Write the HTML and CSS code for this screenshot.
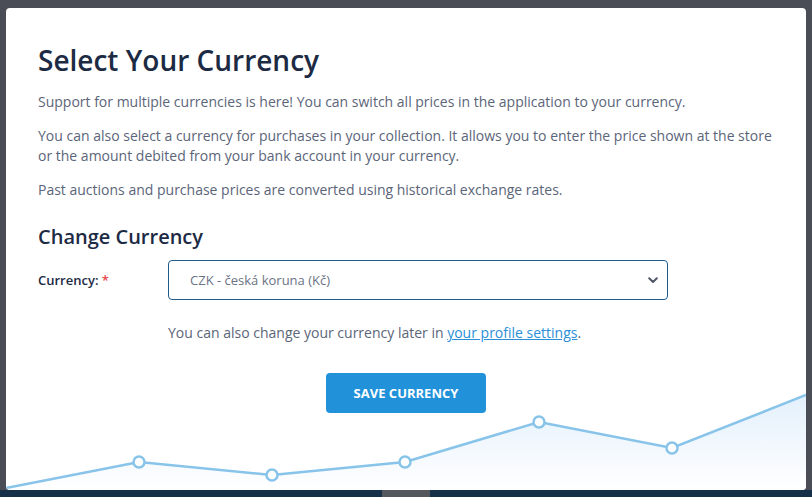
FILE: index.html
```html
<!DOCTYPE html>
<html lang="en">
<head>
    <meta charset="UTF-8">
    <meta name="viewport" content="width=device-width, initial-scale=1.0">
    <title>Select Your Currency</title>
    <link rel="stylesheet" href="styles.css">
</head>
<body>
    <div class="backdrop">
        <div class="modal">
            <svg class="modal-chart" viewBox="0 0 800 100" preserveAspectRatio="none" width="800" height="100">
                <defs>
                    <linearGradient id="chartFill" x1="0" y1="0" x2="0" y2="1">
                        <stop offset="0" stop-color="#e3f0fc"/>
                        <stop offset="1" stop-color="#ffffff"/>
                    </linearGradient>
                </defs>
                <polygon fill="url(#chartFill)" points="0,98 133,72 266,85 399,72 533,32 666,58 800,5 800,100 0,100"/>
                <polyline fill="none" stroke="#88c4ea" stroke-width="2.5" points="0,98 133,72 266,85 399,72 533,32 666,58 800,5"/>
                <g fill="#fff" stroke="#88c4ea" stroke-width="2.5">
                    <circle cx="133" cy="72" r="5.5"/>
                    <circle cx="266" cy="85" r="5.5"/>
                    <circle cx="399" cy="72" r="5.5"/>
                    <circle cx="533" cy="32" r="5.5"/>
                    <circle cx="666" cy="58" r="5.5"/>
                </g>
            </svg>

            <div class="modal-body">
                <h1>Select Your Currency</h1>
                <p>Support for multiple currencies is here! You can switch all prices in the application to your currency.</p>
                <p>You can also select a currency for purchases in your collection. It allows you to enter the price shown at the store or the amount debited from your bank account in your currency.</p>
                <p>Past auctions and purchase prices are converted using historical exchange rates.</p>

                <h2>Change Currency</h2>
                <div class="form-row">
                    <label class="form-label" for="currency">Currency: <span class="required">*</span></label>
                    <div class="select-wrap">
                        <select id="currency" class="form-select">
                            <option>CZK - česká koruna (Kč)</option>
                        </select>
                        <svg class="select-arrow" width="10" height="7" viewBox="0 0 10 7">
                            <path d="M1.2 1.2 L5 5 L8.8 1.2" fill="none" stroke="#4f5766" stroke-width="2" stroke-linecap="round" stroke-linejoin="round"/>
                        </svg>
                    </div>
                </div>
                <p class="form-help">You can also change your currency later in <a href="#">your profile settings</a>.</p>

                <div class="actions">
                    <button class="btn-primary">SAVE CURRENCY</button>
                </div>
            </div>
        </div>
        <div class="page-footer">
            <div class="footer-tab"></div>
        </div>
    </div>
</body>
</html>
```

FILE: styles.css
```css
:root {
    --overlay: #4a4d55;
    --navy: #1d2a44;
    --text: #5b6579;
    --blue: #2191da;
    --link: #2a8fd8;
}

* {
    box-sizing: border-box;
}

body {
    margin: 0;
    font-family: 'Open Sans', 'Noto Sans', sans-serif;
    background: var(--overlay);
    color: var(--text);
}

.backdrop {
    height: 497px;
    display: flex;
    flex-direction: column;
    padding-top: 8px;
    overflow: hidden;
}

.modal {
    position: relative;
    margin: 0 6px;
    height: 482px;
    background: white;
    border-radius: 4px;
    overflow: hidden;
}

.modal-chart {
    position: absolute;
    left: 0;
    bottom: 0;
}

.modal-body {
    position: relative;
    padding: 34px 32px 0;
}

h1 {
    margin: 0 0 14px;
    font-size: 28px;
    font-weight: 600;
    line-height: 36px;
    color: var(--navy);
}

p {
    margin: 0 0 14px;
    font-size: 14px;
    line-height: 20px;
}

h2 {
    margin: 24px 0 11px;
    font-size: 20px;
    font-weight: 600;
    line-height: 25px;
    color: var(--navy);
}

.form-row {
    display: flex;
    align-items: center;
}

.form-label {
    width: 130px;
    font-size: 13px;
    font-weight: 600;
    color: var(--navy);
}

.required {
    color: #e8474f;
}

.select-wrap {
    position: relative;
    width: 500px;
}

.form-select {
    width: 100%;
    height: 40px;
    padding: 0 40px 0 21px;
    border: 1px solid #1f5b8a;
    border-radius: 4px;
    background: white;
    font-family: inherit;
    font-size: 13px;
    color: #6b7385;
    appearance: none;
    outline: none;
}

.select-arrow {
    position: absolute;
    right: 10px;
    top: 17px;
    pointer-events: none;
}

.form-help {
    margin: 23px 0 0 130px;
}

.form-help a {
    color: var(--link);
}

.actions {
    display: flex;
    justify-content: center;
    margin-top: 30px;
}

.btn-primary {
    width: 160px;
    height: 40px;
    border: none;
    border-radius: 4px;
    background: var(--blue);
    color: white;
    font-family: inherit;
    font-size: 13px;
    font-weight: 700;
    cursor: pointer;
}

.page-footer {
    flex: 1;
    background: #16304a;
    display: flex;
}

.footer-tab {
    width: 48px;
    margin-left: 382px;
    background: #55575e;
}
```
